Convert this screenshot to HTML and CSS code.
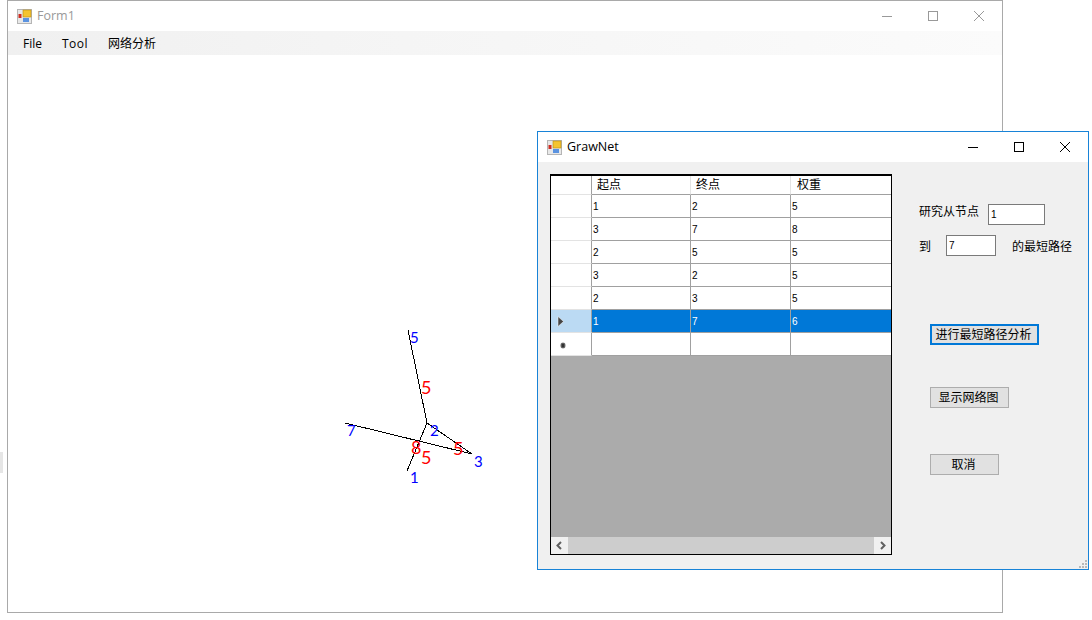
FILE: index.html
```html
<!DOCTYPE html>
<html lang="en">
<head>
    <meta charset="UTF-8">
    <title>Form1</title>
    <link rel="stylesheet" href="styles.css">
</head>
<body>
    <div class="edge-mark"></div>

    <!-- main window -->
    <div class="window main-window">
        <div class="titlebar">
            <svg class="app-icon" viewBox="0 0 15 15">
                <rect x="0.5" y="0.5" width="14" height="14" fill="#e8e8e8" stroke="#b5b5b5"/>
                <rect x="6" y="1" width="8" height="7" fill="#f4c430" stroke="#b98a10" stroke-width="0.6"/>
                <rect x="1.5" y="5" width="3" height="4" fill="#d02c20"/>
                <rect x="6" y="9" width="6" height="4" fill="#5b93e0"/>
            </svg>
            <span class="title-text">Form1</span>
            <div class="win-buttons">
                <svg viewBox="0 0 46 31"><path d="M18 15.5H28" stroke="#999" fill="none"/></svg>
                <svg viewBox="0 0 46 31"><rect x="18.5" y="10.5" width="9" height="9" stroke="#999" fill="none"/></svg>
                <svg viewBox="0 0 46 31"><path d="M18 10L28 20M28 10L18 20" stroke="#999" fill="none"/></svg>
            </div>
        </div>
        <div class="menubar">
            <span class="menu-item">File</span>
            <span class="menu-item tool-item">Tool</span>
            <span class="menu-item">网络分析</span>
        </div>
        <svg class="network" viewBox="0 0 1092 620" width="1092" height="620">
            <g stroke="#000" stroke-width="1" fill="none" shape-rendering="crispEdges">
                <path d="M407 471L427 423"/>
                <path d="M345 423L472 454"/>
                <path d="M427 423L408 330"/>
                <path d="M472 454L427 423"/>
            </g>
            <g class="node-label">
                <text x="410" y="483">1</text>
                <text x="430" y="436">2</text>
                <text x="474" y="467">3</text>
                <text x="410" y="343">5</text>
                <text x="347" y="436">7</text>
            </g>
            <g class="weight-label">
                <text x="421" y="394">5</text>
                <text x="411" y="454">8</text>
                <text x="421" y="464">5</text>
                <text x="453" y="455">5</text>
            </g>
        </svg>
    </div>

    <!-- dialog -->
    <div class="window dialog">
        <div class="titlebar dialog-title">
            <svg class="app-icon" viewBox="0 0 15 15">
                <rect x="0.5" y="0.5" width="14" height="14" fill="#e8e8e8" stroke="#b5b5b5"/>
                <rect x="6" y="1" width="8" height="7" fill="#f4c430" stroke="#b98a10" stroke-width="0.6"/>
                <rect x="1.5" y="5" width="3" height="4" fill="#d02c20"/>
                <rect x="6" y="9" width="6" height="4" fill="#5b93e0"/>
            </svg>
            <span class="title-text">GrawNet</span>
            <div class="win-buttons">
                <svg viewBox="0 0 46 31"><path d="M18 15.5H28" stroke="#000" fill="none"/></svg>
                <svg viewBox="0 0 46 31"><rect x="18.5" y="10.5" width="9" height="9" stroke="#000" fill="none"/></svg>
                <svg viewBox="0 0 46 31"><path d="M18 10L28 20M28 10L18 20" stroke="#000" fill="none"/></svg>
            </div>
        </div>
        <div class="dialog-body">
            <div class="grid-view">
                <table class="grid-table">
                    <tr class="head-row"><th class="row-head"></th><th class="col-a">起点</th><th>终点</th><th class="col-c">权重</th></tr>
                    <tr><td class="row-head"></td><td class="col-a">1</td><td>2</td><td>5</td></tr>
                    <tr><td class="row-head"></td><td class="col-a">3</td><td>7</td><td>8</td></tr>
                    <tr><td class="row-head"></td><td class="col-a">2</td><td>5</td><td>5</td></tr>
                    <tr><td class="row-head"></td><td class="col-a">3</td><td>2</td><td>5</td></tr>
                    <tr><td class="row-head"></td><td class="col-a">2</td><td>3</td><td>5</td></tr>
                    <tr class="selected">
                        <td class="row-head"><svg width="8" height="11" viewBox="0 0 8 11"><path d="M1 0.5L6.5 5.5L1 10.5Z" fill="#444" stroke="#fff" stroke-width="0.5"/></svg></td>
                        <td class="col-a">1</td><td>7</td><td>6</td>
                    </tr>
                    <tr>
                        <td class="row-head"><svg class="new-mark" width="6" height="7" viewBox="0 0 6 7"><ellipse cx="3" cy="3.5" rx="2.6" ry="3" fill="#888"/><rect x="1.5" y="1.5" width="3" height="4" fill="#333"/></svg></td>
                        <td class="col-a"></td><td></td><td></td>
                    </tr>
                </table>
                <div class="h-scroll">
                    <svg class="arrow" width="17" height="17" viewBox="0 0 17 17"><path d="M10 5L6.5 8.5L10 12" stroke="#606060" stroke-width="2" fill="none"/></svg>
                    <div class="thumb"></div>
                    <svg class="arrow" width="17" height="17" viewBox="0 0 17 17"><path d="M7 5L10.5 8.5L7 12" stroke="#606060" stroke-width="2" fill="none"/></svg>
                </div>
            </div>
            <div class="side-panel">
                <div class="field-row first-row">
                    <span class="from-label">研究从节点</span>
                    <input class="text-box from-box" type="text" value="1">
                </div>
                <div class="field-row second-row">
                    <span class="to-label">到</span>
                    <input class="text-box to-box" type="text" value="7">
                    <span>的最短路径</span>
                </div>
                <button class="btn focused">进行最短路径分析</button>
                <button class="btn show-btn">显示网络图</button>
                <button class="btn cancel-btn">取消</button>
            </div>
        </div>
        <svg class="grip" width="10" height="10" viewBox="0 0 10 10">
            <g fill="#b8b8b8">
                <rect x="7" y="1" width="2" height="2"/>
                <rect x="4" y="4" width="2" height="2"/>
                <rect x="7" y="4" width="2" height="2"/>
                <rect x="1" y="7" width="2" height="2"/>
                <rect x="4" y="7" width="2" height="2"/>
                <rect x="7" y="7" width="2" height="2"/>
            </g>
        </svg>
    </div>
</body>
</html>
```

FILE: styles.css
```css
* {
    margin: 0;
    padding: 0;
    box-sizing: border-box;
}

body {
    width: 1092px;
    height: 620px;
    overflow: hidden;
    background: #fff;
    font-family: "Noto Sans CJK SC", "Liberation Sans", sans-serif;
    font-size: 12px;
    color: #000;
    position: relative;
}

.edge-mark {
    position: absolute;
    left: 0;
    top: 452px;
    width: 3px;
    height: 21px;
    background: #e6e6e6;
}

/* Windows sit on a free desktop */
.window {
    position: absolute;
    background: #fff;
}

.main-window {
    left: 7px;
    top: 0;
    width: 996px;
    height: 613px;
    border: 1px solid #a9a9a9;
}

.dialog {
    left: 537px;
    top: 131px;
    width: 552px;
    height: 439px;
    border: 1px solid #1883d7;
    background: #f0f0f0;
}

.titlebar {
    height: 30px;
    display: flex;
    align-items: center;
    padding-left: 9px;
    background: #fff;
}

.app-icon {
    width: 15px;
    height: 15px;
    margin-right: 6px;
}

.title-text {
    font-family: "Open Sans", sans-serif;
    font-size: 12.5px;
    line-height: 28px;
    margin-left: -1px;
    padding-bottom: 1px;
    color: #999;
}

.dialog-title .title-text {
    color: #000;
}

.win-buttons {
    margin-left: auto;
    display: flex;
}

.win-buttons svg {
    width: 46px;
    height: 31px;
    display: block;
}

.menubar {
    height: 24px;
    display: flex;
    align-items: center;
    padding-left: 5px;
    background: linear-gradient(90deg, #f0f0f0, #f5f5f5 40%, #fbfbfb);
}

.menu-item {
    padding: 0 10px;
    font-size: 12px;
    color: #000;
    font-family: "Open Sans", "Noto Sans CJK SC", sans-serif;
}

.tool-item {
    letter-spacing: 0.5px;
}

.network {
    position: absolute;
    left: -8px;
    top: -1px;
}

.node-label text {
    font-family: Lato, "Liberation Sans", sans-serif;
    font-size: 15px;
    fill: #0000ff;
}

.weight-label text {
    font-family: Lato, "Liberation Sans", sans-serif;
    font-size: 18px;
    fill: #ff0000;
}

.dialog-body {
    display: flex;
    padding: 12px 0 0 12px;
}

.grid-view {
    width: 342px;
    height: 381px;
    border: 1px solid #000;
    border-top-width: 2px;
    background: #ababab;
    display: flex;
    flex-direction: column;
    justify-content: space-between;
}

.grid-table {
    width: 340px;
    table-layout: fixed;
    border-collapse: separate;
    border-spacing: 0;
    background: #fff;
    font-family: "Liberation Sans", sans-serif;
    font-size: 10px;
}

.grid-table th,
.grid-table td {
    width: 100px;
    height: 23px;
    padding: 0 0 0 1px;
    text-align: left;
    font-weight: normal;
    border-right: 1px solid #a0a0a0;
    border-bottom: 1px solid #a0a0a0;
}

.grid-table th {
    height: 19px;
    padding: 0 0 2px 5px;
    font-family: "Noto Sans CJK SC", sans-serif;
    font-size: 12px;
    line-height: 16px;
    border-right-color: #e3e3e3;
}

.grid-table th.col-a,
.grid-table td.col-a {
    width: 99px;
}

.grid-table th.col-c {
    padding-left: 6px;
}

.grid-table th:last-child,
.grid-table td:last-child {
    border-right: none;
}

.grid-table th.row-head,
.grid-table td.row-head {
    width: 41px;
    border-bottom-color: #e3e3e3;
    border-right-color: #a0a0a0;
}

.grid-table td.row-head {
    padding-left: 6px;
}

.head-row th {
    border-bottom-color: #a0a0a0;
}

.row-head svg {
    display: block;
}

.row-head .new-mark {
    margin: 3px 0 0 3px;
}

.selected td {
    background: #0078d7;
    color: #fff;
}

.selected td.row-head {
    background: #bbdaf3;
}

.h-scroll {
    height: 17px;
    background: #f0f0f0;
    display: flex;
}

.arrow {
    flex: none;
}

.thumb {
    flex: 1;
    background: #cdcdcd;
}

.side-panel {
    flex: 1;
    position: relative;
    display: flex;
    flex-direction: column;
    align-items: flex-start;
    padding: 30px 0 0 27px;
}

.field-row {
    display: flex;
    align-items: center;
    height: 21px;
    line-height: 21px;
}

.from-label {
    width: 69px;
    margin-top: -8px;
}

.to-label {
    width: 27px;
}

.second-row {
    margin-top: 10px;
}

.text-box {
    height: 21px;
    border: 1px solid #7a7a7a;
    background: #fff;
    padding-left: 2px;
    font-family: "Liberation Sans", sans-serif;
    font-size: 10px;
    outline: none;
}

.from-box {
    width: 57px;
}

.to-box {
    width: 50px;
    margin-right: 16px;
}

.btn {
    height: 21px;
    margin-left: 11px;
    padding: 0 2px 2px 0;
    border: 1px solid #adadad;
    background: #e1e1e1;
    font-family: "Noto Sans CJK SC", sans-serif;
    font-size: 12px;
    line-height: 16px;
    color: #000;
}

.focused {
    width: 109px;
    margin-top: 68px;
    border: 2px solid #0078d7;
}

.show-btn {
    width: 79px;
    margin-top: 42px;
}

.cancel-btn {
    width: 69px;
    margin-top: 46px;
}

.grip {
    position: absolute;
    right: 0;
    bottom: 0;
}
```
